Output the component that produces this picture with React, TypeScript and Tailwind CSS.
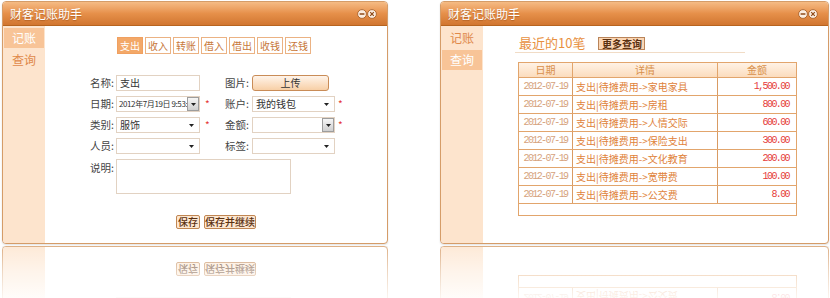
import React from "react";

function WinIcons() {
  return (
    <div className="flex items-center mr-[10px]">
      <svg width="10" height="10" viewBox="0 0 10 10">
        <circle cx="5" cy="5" r="4.4" fill="#fbeee2" stroke="#a9612a" strokeWidth="0.9" />
        <path d="M2.6 5h4.8" stroke="#8e4a18" strokeWidth="1.5" />
      </svg>
      <svg width="10" height="10" viewBox="0 0 10 10">
        <circle cx="5" cy="5" r="4.4" fill="#fbeee2" stroke="#a9612a" strokeWidth="0.9" />
        <path d="M3.2 3.2l3.6 3.6M6.8 3.2l-3.6 3.6" stroke="#8e4a18" strokeWidth="1.2" />
      </svg>
    </div>
  );
}

function Header() {
  return (
    <div className="h-[24px] flex items-center justify-between pl-[7px] bg-linear-to-b from-[#f5bb84] via-[#e6904a] to-[#d17630] border-b border-[#b7641f]">
      <span className="text-white text-[12px] leading-[14px] [text-shadow:0_1px_1px_rgba(120,50,0,0.4)]">财客记账助手</span>
      <WinIcons />
    </div>
  );
}

function Sidebar({ active }: { active: number }) {
  return (
    <div className="w-[42px] shrink-0 bg-[#fde4cd] flex flex-col gap-[2px] pt-[2px]">
      {["记账", "查询"].map((t, i) => (
        <div
          key={t}
          className={
            i === active
              ? "h-[20px] mx-[1px] flex items-center justify-center text-[12px] bg-[#f8c497] text-white"
              : "h-[20px] mx-[1px] flex items-center justify-center text-[12px] text-[#e0894a]"
          }
        >
          {t}
        </div>
      ))}
    </div>
  );
}

function Arrow() {
  return (
    <svg width="5" height="3" viewBox="0 0 5 3" className="shrink-0">
      <path d="M0 0h5L2.5 3z" fill="#222" />
    </svg>
  );
}

function GrayBtn() {
  return (
    <div className="w-[12px] h-[14px] shrink-0 flex items-center justify-center border border-[#9d9d9d] bg-linear-to-b from-[#f6f6f6] to-[#cfcfcf]">
      <Arrow />
    </div>
  );
}

function Field({ w, text, kind, small }: { w: string; text?: string; kind: "input" | "select" | "combo"; small?: boolean }) {
  return (
    <div className={`${w} h-[16px] shrink-0 border border-[#e2d2c2] bg-white flex items-center text-[#333]`}>
      <span
        className={
          small
            ? "flex-1 min-w-0 pl-[2px] whitespace-nowrap text-[8px] leading-[12px] tracking-[-0.4px]"
            : "flex-1 min-w-0 pl-[3px] whitespace-nowrap text-[10px] leading-[12px]"
        }
      >
        {text}
      </span>
      {kind === "select" && (
        <span className="pr-[5px] flex items-center">
          <Arrow />
        </span>
      )}
      {kind === "combo" && <GrayBtn />}
    </div>
  );
}

function Star() {
  return <span className="text-[#e53535] text-[10px] leading-[10px]">*</span>;
}

function Lbl({ children, w }: { children: React.ReactNode; w: string }) {
  return <div className={`${w} shrink-0 text-[10.5px] text-[#444] leading-[12px]`}>{children}</div>;
}

function FormWindow() {
  const tabs = ["支出", "收入", "转账", "借入", "借出", "收钱", "还钱"];
  return (
    <div className="w-[386px] h-[244px] border border-[#d59c68] rounded-[4px] overflow-hidden bg-white flex flex-col shadow-[0_1px_2px_rgba(0,0,0,0.12)]">
      <Header />
      <div className="flex flex-1">
        <Sidebar active={0} />
        <div className="flex-1 flex flex-col">
          <div className="flex gap-[2px] ml-[72px] mt-[11px]">
            {tabs.map((t, i) => (
              <div
                key={t}
                className={
                  i === 0
                    ? "w-[26px] h-[17px] flex items-center justify-center text-[10px] bg-[#f3a868] border border-[#f0a060] text-white"
                    : "w-[26px] h-[17px] flex items-center justify-center text-[10px] bg-white border border-[#ebb283] text-[#c8783a]"
                }
              >
                {t}
              </div>
            ))}
          </div>

          <div className="flex flex-col gap-[5px] mt-[21px] pl-[45px]">
            <div className="flex items-center h-[16px]">
              <Lbl w="w-[26px]">名称:</Lbl>
              <Field w="w-[84px]" text="支出" kind="input" />
              <div className="w-[25px]" />
              <Lbl w="w-[27px]">图片:</Lbl>
              <div className="w-[77px] h-[16px] rounded-[3px] border border-[#c98c57] bg-linear-to-b from-[#fff4ea] to-[#f7cfa6] flex items-center justify-center text-[10px] leading-[12px] text-[#333]">
                上传
              </div>
            </div>
            <div className="flex items-center h-[16px]">
              <Lbl w="w-[26px]">日期:</Lbl>
              <Field w="w-[84px]" text="2012年7月19日 9:53:" kind="combo" small />
              <div className="w-[25px] pl-[5px] flex">
                <Star />
              </div>
              <Lbl w="w-[27px]">账户:</Lbl>
              <Field w="w-[83px]" text="我的钱包" kind="select" />
              <div className="pl-[3px] flex">
                <Star />
              </div>
            </div>
            <div className="flex items-center h-[16px]">
              <Lbl w="w-[26px]">类别:</Lbl>
              <Field w="w-[84px]" text="服饰" kind="select" />
              <div className="w-[25px] pl-[5px] flex">
                <Star />
              </div>
              <Lbl w="w-[27px]">金额:</Lbl>
              <Field w="w-[83px]" text="" kind="combo" />
              <div className="pl-[3px] flex">
                <Star />
              </div>
            </div>
            <div className="flex items-center h-[16px]">
              <Lbl w="w-[26px]">人员:</Lbl>
              <Field w="w-[84px]" text="" kind="select" />
              <div className="w-[25px]" />
              <Lbl w="w-[27px]">标签:</Lbl>
              <Field w="w-[83px]" text="" kind="select" />
            </div>
            <div className="flex items-start">
              <Lbl w="w-[26px] pt-[3px]">说明:</Lbl>
              <div className="w-[175px] h-[35px] border border-[#e2d2c2] bg-white" />
            </div>
          </div>

          <div className="flex gap-[4px] mt-[21px] pl-[131px]">
            <div className="w-[24px] h-[14px] rounded-[2px] border border-[#c08653] bg-[#fde6cf] flex items-center justify-center text-[10px] leading-[12px] text-[#5a3010] font-medium">
              保存
            </div>
            <div className="w-[52px] h-[14px] rounded-[2px] border border-[#c08653] bg-[#fde6cf] flex items-center justify-center text-[10px] leading-[12px] text-[#5a3010] font-medium">
              保存并继续
            </div>
          </div>
        </div>
      </div>
    </div>
  );
}

const rows = [
  ["家电家具", "1,500.00"],
  ["房租", "800.00"],
  ["人情交际", "600.00"],
  ["保险支出", "300.00"],
  ["文化教育", "200.00"],
  ["宽带费", "100.00"],
  ["公交费", "8.00"],
];

function ListWindow() {
  return (
    <div className="w-[389px] h-[244px] border border-[#d59c68] rounded-[4px] overflow-hidden bg-white flex flex-col shadow-[0_1px_2px_rgba(0,0,0,0.12)]">
      <Header />
      <div className="flex flex-1">
        <Sidebar active={1} />
        <div className="flex-1 flex flex-col pl-[32px]">
          <div className="flex items-center mt-[10px] h-[14px] ml-[4px]">
            <span className="text-[13px] leading-[14px] text-[#e8913f]">最近的10笔</span>
            <div className="ml-[13px] w-[47px] h-[13px] border border-[#b98459] bg-[#fbd6b4] flex items-center justify-center text-[10px] font-semibold text-[#5a3010] leading-[11px]">
              更多查询
            </div>
          </div>
          <div className="mt-[2px] w-[230px] h-px bg-[#f1dcc6]" />
          <div className="mt-[9px] ml-[3px] w-[279px] h-[154px] border border-[#e2a56c] flex flex-col">
            <div className="h-[15px] flex border-b border-[#e2a56c] bg-linear-to-b from-[#fff2e5] to-[#fbdcbd] text-[10px] text-[#d8904c] leading-[12px]">
              <div className="w-[54px] flex items-center justify-center border-r border-[#e2a56c]">日期</div>
              <div className="w-[145px] flex items-center justify-center border-r border-[#e2a56c]">详情</div>
              <div className="flex-1 flex items-center justify-center">金额</div>
            </div>
            {rows.map(([d, a]) => (
              <div key={d} className="h-[18px] flex border-b border-[#e2a56c] leading-[12px]">
                <div className="w-[54px] flex items-center justify-center border-r border-[#d99b63] font-['Liberation_Mono',monospace] text-[10px] tracking-[-1.6px] text-[#d6a27c]">
                  2012-07-19
                </div>
                <div className="w-[145px] flex items-center pl-[3px] border-r border-[#d99b63] text-[10px] text-[#e0823a] whitespace-nowrap">
                  支出|待摊费用-&gt;{d}
                </div>
                <div className="flex-1 flex items-center justify-end pr-[7px] font-['Liberation_Mono',monospace] text-[10px] tracking-[-1.6px] text-[#e53b3b]">
                  {a}
                </div>
              </div>
            ))}
          </div>
        </div>
      </div>
    </div>
  );
}

function WithReflection({ children }: { children: React.ReactNode }) {
  return (
    <div className="flex flex-col">
      {children}
      <div aria-hidden="true" className="relative mt-[2px] h-[52px] overflow-hidden">
        <div className="[transform:scaleY(-1)] h-[244px]">{children}</div>
        <div className="absolute inset-0 bg-linear-to-b from-white/20 via-white/60 to-white/90" />
      </div>
    </div>
  );
}

export default function App() {
  return (
    <div className="w-[830px] h-[298px] bg-white overflow-hidden pt-[1px] pl-[2px] flex gap-[52px] font-['Noto_Sans_CJK_SC','Liberation_Sans',sans-serif]">
      <WithReflection>
        <FormWindow />
      </WithReflection>
      <WithReflection>
        <ListWindow />
      </WithReflection>
    </div>
  );
}
